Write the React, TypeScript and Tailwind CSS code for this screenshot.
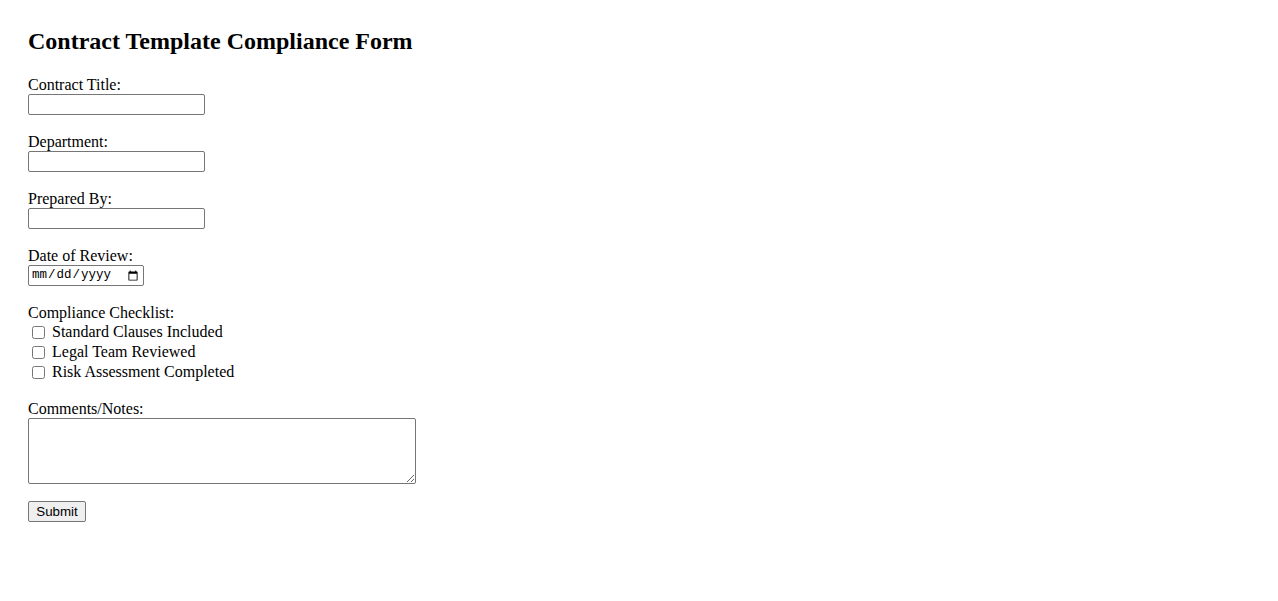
import { useState, type FormEvent } from 'react';

const CHECKS = ['Standard Clauses Included', 'Legal Team Reviewed', 'Risk Assessment Completed'];

const inputCls =
  'block w-[177px] h-[21px] border border-[#767676] rounded-[2px] px-[2px] py-[1px] bg-white text-[13.33px] font-["Liberation_Sans",Arial,sans-serif]';

const Field = ({ label, id }: { label: string; id: string }) => (
  <div className="mb-[18.1px]">
    <label htmlFor={id} className="block leading-[normal]">
      {label}
    </label>
    <input id={id} type="text" className={inputCls} />
  </div>
);

export default function App() {
  const [checked, setChecked] = useState<Record<string, boolean>>({});

  const handleSubmit = (e: FormEvent) => {
    e.preventDefault();
  };

  return (
    <div className="min-h-screen bg-white text-black font-['Liberation_Serif','Times_New_Roman',serif] text-base px-[28px] pt-[28px]">
      <h1 className="text-2xl font-bold leading-[normal] mb-[21px]">Contract Template Compliance Form</h1>

      <form onSubmit={handleSubmit}>
        <Field label="Contract Title:" id="title" />
        <Field label="Department:" id="dept" />
        <Field label="Prepared By:" id="prepared" />

        <div className="mb-[18.1px]">
          <label htmlFor="date" className="block leading-[normal]">
            Date of Review:
          </label>
          <input
            id="date"
            type="date"
            className="block w-[116px] h-[21px] border border-[#767676] rounded-[2px] px-[2px] py-[1px] bg-white text-[12.5px] font-['Liberation_Mono',monospace]"
          />
        </div>

        <div className="mb-[18.1px]">
          <div className="leading-[normal]">Compliance Checklist:</div>
          {CHECKS.map((c) => (
            <label key={c} className="flex items-center h-[20px] leading-[normal]">
              <input
                type="checkbox"
                className="w-[13px] h-[13px] ml-[4px] mr-[7px]"
                checked={!!checked[c]}
                onChange={(e) => setChecked({ ...checked, [c]: e.target.checked })}
              />
              {c}
            </label>
          ))}
        </div>

        <div className="mb-[17px]">
          <label htmlFor="notes" className="block leading-[normal]">
            Comments/Notes:
          </label>
          <textarea
            id="notes"
            className="block w-[388px] h-[66px] border border-[#767676] rounded-[2px] px-[2px] py-[2px] bg-white text-[13.33px] font-['Liberation_Mono',monospace]"
          />
        </div>

        <button
          type="submit"
          className="block w-[58px] h-[21px] border border-[#767676] rounded-[2px] bg-[#efefef] text-[13.33px] leading-none font-['Liberation_Sans',Arial,sans-serif] text-black"
        >
          Submit
        </button>
      </form>
    </div>
  );
}
